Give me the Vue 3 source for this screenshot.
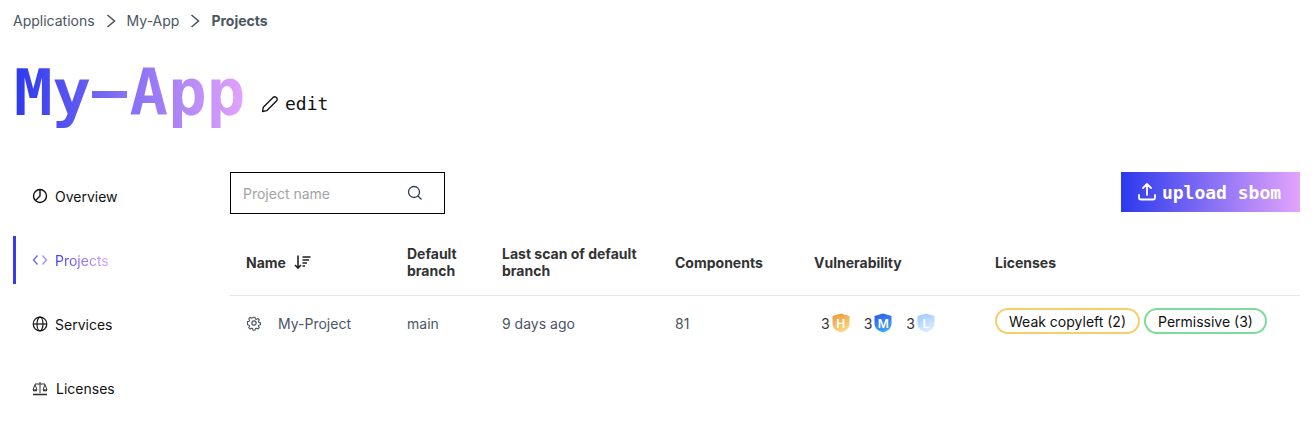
<script setup>
const nav = [
  { key: 'overview', label: 'Overview' },
  { key: 'projects', label: 'Projects', active: true },
  { key: 'services', label: 'Services' },
  { key: 'licenses', label: 'Licenses' }
]
const vulns = [
  { n: 3, l: 'H', c1: '#e8963a', c2: '#fbd77f' },
  { n: 3, l: 'M', c1: '#2f55ee', c2: '#3ea2f7' },
  { n: 3, l: 'L', c1: '#9cc6fb', c2: '#d8ebff' }
]
</script>

<template>
  <div class="page">
    <nav class="crumbs">
      <span>Applications</span>
      <svg class="chev" viewBox="0 0 10 14" width="10" height="14"><path d="M1.500 1 8.500 7l-7 6" fill="none" stroke="#4b5563" stroke-width="1.600"/></svg>
      <span>My-App</span>
      <svg class="chev" viewBox="0 0 10 14" width="10" height="14"><path d="M1.500 1 8.500 7l-7 6" fill="none" stroke="#4b5563" stroke-width="1.600"/></svg>
      <b>Projects</b>
    </nav>

    <header class="head">
      <h1 class="title"><span class="seg seg1">My</span><span class="dash">-</span><span class="seg seg3">App</span></h1>
      <button class="edit">
        <svg viewBox="0 0 18 18" width="18" height="18" fill="none" stroke="#111" stroke-width="1.300" stroke-linejoin="round"><path d="M1.500 16.500l.8-4.200L12.300 2.300a1.900 1.900 0 0 1 2.700 0l.7.700a1.900 1.900 0 0 1 0 2.700l-10 10z"/></svg>
        <span>edit</span>
      </button>
    </header>

    <div class="body">
      <aside class="side">
        <a v-for="item in nav" :key="item.key" class="nav" :class="{ active: item.active, lic: item.key === 'licenses' }">
          <svg v-if="item.key === 'overview'" viewBox="0 0 16 16" width="16" height="16" fill="none" stroke="#111" stroke-width="1.400"><circle cx="8" cy="8" r="6.500"/><path d="M8 1.500V8l-4.500 4.500"/></svg>
          <svg v-else-if="item.key === 'projects'" viewBox="0 0 16 16" width="16" height="16" fill="none" stroke-width="1.300"><path d="M5.500 3.500 1.500 8l4 4.500" stroke="#6a63f0"/><path d="M10.500 3.500l4 4.500-4 4.500" stroke="#a78bf5"/></svg>
          <svg v-else-if="item.key === 'services'" viewBox="0 0 16 16" width="16" height="16" fill="none" stroke="#111" stroke-width="1.200"><circle cx="8" cy="8" r="6.800"/><ellipse cx="8" cy="8" rx="3" ry="6.800"/><path d="M1.200 8h13.600"/></svg>
          <svg v-else viewBox="0 0 16 16" width="16" height="16" fill="none" stroke="#333" stroke-width="1"><path d="M8 2v11M3 4h10"/><path d="M1 10l2-5.500L5 10zM11 10l2-5.500 2 5.500z"/><path d="M1 10.500h4M11 10.500h4" stroke-width="1.600"/><path d="M1 14.500h14" stroke-width="1.600"/></svg>
          <span class="label">{{ item.label }}</span>
        </a>
      </aside>

      <main class="main">
        <div class="toolbar">
          <div class="search">
            <span class="ph">Project name</span>
            <svg viewBox="0 0 16 16" width="16" height="16" fill="none" stroke="#2d3a55" stroke-width="1.300"><circle cx="7" cy="7" r="5.500"/><path d="M11 11l3.500 3.500"/></svg>
          </div>
          <button class="upload">
            <svg viewBox="0 0 20 20" width="20" height="20" fill="none" stroke="#fff" stroke-width="1.800" stroke-linecap="round" stroke-linejoin="round"><path d="M10 13V2.500M6 6l4-4 4 4M2 13v2.500A2 2 0 0 0 4 17.500h12a2 2 0 0 0 2-2V13"/></svg>
            <span>upload sbom</span>
          </button>
        </div>

        <table class="tbl">
          <colgroup>
            <col class="c1"><col class="c2"><col class="c3"><col class="c4"><col class="c5"><col>
          </colgroup>
          <thead>
            <tr>
              <th>
                <span class="sort">Name
                  <svg viewBox="0 0 18 16" width="18" height="16" fill="none" stroke="#222"><path d="M5 1.500v12.500M2 11l3 3 3-3" stroke-width="1.600"/><path d="M9.500 3h8M9.500 6h6.500M9.500 9h4.500M9.500 12h2.500" stroke-width="1.300"/></svg>
                </span>
              </th>
              <th>Default branch</th>
              <th>Last scan of default branch</th>
              <th>Components</th>
              <th>Vulnerability</th>
              <th>Licenses</th>
            </tr>
          </thead>
          <tbody>
            <tr>
              <td>
                <span class="proj">
                  <svg viewBox="0 0 24 24" width="16" height="16" fill="none" stroke="#4b5563" stroke-width="1.800" stroke-linejoin="round"><path d="M10.300 2.500h3.400l.6 2.800 1.700.7 2.400-1.500 2.400 2.400-1.500 2.400.7 1.700 2.800.6v3.400l-2.800.6-.7 1.700 1.500 2.400-2.400 2.400-2.400-1.500-1.700.7-.6 2.800h-3.400l-.6-2.800-1.700-.7-2.400 1.500-2.400-2.400 1.500-2.400-.7-1.700-2.800-.6V9.700l2.800-.6.700-1.700-1.500-2.400 2.400-2.400 2.400 1.500 1.700-.7z" transform="translate(12 12) scale(.9) translate(-12 -12)"/><circle cx="12" cy="12" r="3.200"/></svg>
                  My-Project
                </span>
              </td>
              <td>main</td>
              <td>9 days ago</td>
              <td>81</td>
              <td>
                <span class="vulns">
                  <span v-for="v in vulns" :key="v.l" class="vuln">
                    <span class="vn">{{ v.n }}</span>
                    <span class="shield">
                      <svg viewBox="0 0 18 20" width="18" height="20">
                        <defs>
                          <linearGradient :id="'g' + v.l" x1="0" y1="0" x2="0.400" y2="1">
                            <stop offset="0" :stop-color="v.c1"/><stop offset="1" :stop-color="v.c2"/>
                          </linearGradient>
                        </defs>
                        <path d="M9 .5 17.500 3v7.500c0 4.500-3.500 7.500-8.500 9-5-1.500-8.500-4.500-8.500-9V3z" :fill="'url(#g' + v.l + ')'"/>
                      </svg>
                      <span class="sl">{{ v.l }}</span>
                    </span>
                  </span>
                </span>
              </td>
              <td>
                <span class="pills">
                  <span class="pill weak">Weak copyleft (2)</span>
                  <span class="pill perm">Permissive (3)</span>
                </span>
              </td>
            </tr>
          </tbody>
        </table>
      </main>
    </div>
  </div>
</template>

<style>
html, body { background: #fff; }
</style>

<style scoped>
.page {
  width: 1316px;
  height: 428px;
  overflow: hidden;
  font-family: Inter, "Noto Sans", sans-serif;
  font-size: 14px;
  color: #111;
  box-sizing: border-box;
  padding: 12px 16px 0 13px;
}
.crumbs {
  display: flex;
  align-items: center;
  height: 18px;
  gap: 11px;
  color: #4b5563;
  line-height: 18px;
}
.crumbs b { font-weight: 700; }
.head {
  display: flex;
  align-items: flex-end;
  margin-top: 23px;
  height: 80px;
}
.title {
  margin: 0 0 0 1px;
  font-family: "DejaVu Sans Mono", monospace;
  font-weight: 700;
  font-size: 64px;
  line-height: 80px;
  width: 230px;
  display: flex;
}
.seg {
  display: block;
  background-image: linear-gradient(90deg, #2b3aee, #e3a4fb);
  background-size: 230px 100%;
  -webkit-background-clip: text;
  background-clip: text;
  color: transparent;
}
.dash {
  display: block;
  position: relative;
  color: transparent;
}
.dash::after {
  content: "";
  position: absolute;
  left: 1px;
  top: 38px;
  width: 35px;
  height: 7px;
  background: linear-gradient(90deg, #6a62f2, #8872f5);
}
.seg3 { background-position: -115px 0; }
.edit {
  display: flex;
  align-items: center;
  gap: 6px;
  border: 0;
  background: none;
  padding: 0;
  margin: 0 0 19px 17px;
  font-family: "DejaVu Sans Mono", monospace;
  font-size: 18px;
  color: #111;
}
.body {
  display: flex;
  margin-top: 39px;
}
.side {
  width: 217px;
  flex: none;
}
.nav {
  display: flex;
  align-items: center;
  height: 48px;
  margin-bottom: 16px;
  padding-left: 19px;
  gap: 7px;
  box-sizing: border-box;
  position: relative;
  color: #111;
}
.nav.lic { gap: 8px; }
.nav.active::before {
  content: "";
  position: absolute;
  left: 0;
  top: 0;
  width: 3px;
  height: 48px;
  background: #3b3af0;
}
.nav.active .label {
  background: linear-gradient(90deg, #3b3af0, #e3a4fb);
  -webkit-background-clip: text;
  background-clip: text;
  color: transparent;
}
.main { flex: 1; min-width: 0; }
.toolbar {
  display: flex;
  justify-content: space-between;
  align-items: flex-start;
}
.search {
  width: 215px;
  height: 42px;
  box-sizing: border-box;
  border: 1px solid #000;
  display: flex;
  align-items: center;
  justify-content: space-between;
  padding: 0 21px 0 12px;
}
.ph { color: #a3a3a3; }
.upload {
  width: 179px;
  height: 40px;
  border: 0;
  padding: 0 3px 0 0;
  display: flex;
  align-items: center;
  justify-content: center;
  gap: 5px;
  color: #fff;
  background: linear-gradient(90deg, #2b3aee, #e3a4fb);
  font-family: "DejaVu Sans Mono", monospace;
  font-size: 18px;
  font-weight: 700;
}
.tbl {
  width: 100%;
  margin-top: 16px;
  border-collapse: collapse;
  table-layout: fixed;
}
.c1 { width: 161px; }
.c2 { width: 95px; }
.c3 { width: 173px; }
.c4 { width: 139px; }
.c5 { width: 181px; }
th {
  text-align: left;
  font-weight: 700;
  color: #333;
  line-height: 17px;
  height: 65px;
  padding: 0 16px;
  box-sizing: border-box;
  border-bottom: 1px solid #e5e7eb;
}
td {
  height: 55px;
  padding: 0 16px;
  color: #4b5563;
  white-space: nowrap;
}
.sort { display: flex; align-items: center; gap: 7px; }
.proj { display: flex; align-items: center; gap: 16px; }
.vulns { display: flex; align-items: center; gap: 14px; padding-left: 7px; }
.vuln { display: flex; align-items: center; gap: 2px; }
.vn { color: #333; }
.shield { position: relative; width: 18px; height: 20px; display: block; }
.shield svg { display: block; }
.sl {
  position: absolute;
  inset: 0;
  display: flex;
  align-items: center;
  justify-content: center;
  color: #fff;
  font-size: 12px;
  font-weight: 600;
}
.pills { display: flex; gap: 4px; padding-bottom: 4px; }
.pill {
  height: 26px;
  box-sizing: border-box;
  border: 2px solid;
  border-radius: 13px;
  padding: 0 12px;
  display: flex;
  align-items: center;
  color: #111;
}
.weak { border-color: #f3cf6b; }
.perm { border-color: #7ddb9c; }
</style>
